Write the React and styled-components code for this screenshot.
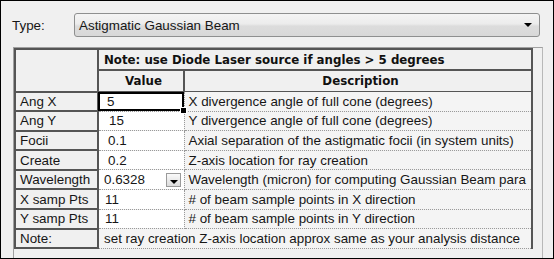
import React from 'react';
import styled, { createGlobalStyle } from 'styled-components';

const rows = [
  { label: 'Ang X', value: '5', desc: 'X divergence angle of full cone (degrees)', pad: 8, focus: true },
  { label: 'Ang Y', value: '15', desc: 'Y divergence angle of full cone (degrees)', pad: 10 },
  { label: 'Focii', value: '0.1', desc: 'Axial separation of the astigmatic focii (in system units)', pad: 9 },
  { label: 'Create', value: '0.2', desc: 'Z-axis location for ray creation', pad: 9 },
  { label: 'Wavelength', value: '0.6328', desc: 'Wavelength (micron) for computing Gaussian Beam para', pad: 5, drop: true },
  { label: 'X samp Pts', value: '11', desc: '# of beam sample points in X direction', pad: 6 },
  { label: 'Y samp Pts', value: '11', desc: '# of beam sample points in Y direction', pad: 6 },
];

const App = () => {
  return (
    <>
      <GlobalStyle />
      <Window>
        <TypeRow>
          <TypeLabel>Type:</TypeLabel>
          <Combo>
            <span>Astigmatic Gaussian Beam</span>
            <ComboArrow />
          </Combo>
        </TypeRow>
        <Panel>
          <Grid>
            <colgroup>
              <col style={{ width: 83 }} />
              <col style={{ width: 86 }} />
              <col style={{ width: 348 }} />
            </colgroup>
            <tbody>
              <tr>
                <Corner rowSpan={2} />
                <HeadCell colSpan={2} $h={21}>Note: use Diode Laser source if angles &gt; 5 degrees</HeadCell>
              </tr>
              <tr>
                <HeadCell $h={22} $center>Value</HeadCell>
                <HeadCell $h={22} $center>Description</HeadCell>
              </tr>
              {rows.map((r) => (
                <tr key={r.label}>
                  <RowHead>{r.label}</RowHead>
                  <ValueCell $pad={r.pad} $focus={r.focus}>
                    {r.value}
                    {r.drop && <DropButton />}
                    {r.focus && <FillHandle />}
                  </ValueCell>
                  <DescCell>{r.desc}</DescCell>
                </tr>
              ))}
              <tr>
                <RowHead>Note:</RowHead>
                <NoteCell colSpan={2}>
                  set ray creation Z-axis location approx same as your analysis distance
                </NoteCell>
              </tr>
            </tbody>
          </Grid>
          <Strip />
        </Panel>
      </Window>
    </>
  );
};

const GlobalStyle = createGlobalStyle`
  html, body {
    margin: 0;
    padding: 0;
    background: #f0f0f0;
  }
  body {
    font-family: "Liberation Sans", Arial, sans-serif;
    font-size: 13.4px;
    color: #161616;
  }
`;

const Window = styled.div`
  box-sizing: border-box;
  width: 554px;
  height: 259px;
  border: 1px solid #000;
  background: #f0f0f0;
  padding: 12px 12px 0 11px;
  overflow: hidden;
`;

const TypeRow = styled.div`
  display: flex;
  align-items: center;
  height: 24px;
`;

const TypeLabel = styled.div`
  width: 62px;
  font-size: 13.4px;
`;

const Combo = styled.div`
  box-sizing: border-box;
  flex: 1;
  height: 24px;
  margin-right: 1px;
  border: 1px solid #8e8f8f;
  border-radius: 3px;
  background: linear-gradient(#f4f4f4 0%, #ececec 45%, #dcdcdc 55%, #d8d8d8 100%);
  display: flex;
  align-items: center;
  justify-content: space-between;
  padding: 0 6px 0 4px;
  font-size: 13.4px;
`;

const ComboArrow = styled.div`
  width: 0;
  height: 0;
  border-left: 4px solid transparent;
  border-right: 4px solid transparent;
  border-top: 4px solid #000;
  margin-right: 1px;
`;

const Panel = styled.div`
  display: flex;
  margin-top: 10px;
  margin-left: 1px;
  width: 528px;
  border-top: 1px solid #a0a0a0;
  border-left: 1px solid #a0a0a0;
  border-right: 1px solid #b8b8b8;
  height: 230px;
`;

const Grid = styled.table`
  table-layout: fixed;
  border-collapse: collapse;
  width: 517px;
  align-self: flex-start;
`;

const Strip = styled.div`
  flex: 1;
  background: #f0f0f0;
`;

const Corner = styled.td`
  background: #f0f0f0;
  border: 2px solid #555;
  padding: 0;
`;

const HeadCell = styled.td`
  height: ${(p) => p.$h - 2}px;
  padding: 0 0 0 5px;
  border: 2px solid #555;
  border-bottom-width: 1px;
  background: #f0f0f0;
  font-family: "DejaVu Sans", Verdana, sans-serif;
  font-weight: bold;
  font-size: 11.8px;
  color: #111;
  text-align: ${(p) => (p.$center ? 'center' : 'left')};
  white-space: nowrap;
  overflow: hidden;
`;

const RowHead = styled.td`
  height: 17.6px;
  padding: 0 0 0 4px;
  border: 2px solid #555;
  border-top-width: 1px;
  background: #f0f0f0;
  white-space: nowrap;
  overflow: hidden;
`;

const ValueCell = styled.td`
  position: relative;
  height: 17.6px;
  padding: 0 0 0 ${(p) => p.$pad}px;
  background: #fff;
  border: 1px dotted #9a9a9a;
  white-space: nowrap;
  ${(p) => p.$focus && 'outline: 2px solid #000; outline-offset: -2px;'}
`;

const FillHandle = styled.span`
  position: absolute;
  right: -3px;
  bottom: -3px;
  width: 5px;
  height: 5px;
  background: #000;
  border: 1px solid #fff;
  z-index: 2;
`;

const DropButton = styled.span`
  position: absolute;
  right: 3px;
  top: 3px;
  width: 15px;
  height: 14px;
  box-sizing: border-box;
  border: 1px solid #9a9a9a;
  background: linear-gradient(#fafafa, #dcdcdc);
  &::after {
    content: '';
    position: absolute;
    left: 3px;
    top: 6px;
    width: 0;
    height: 0;
    border-left: 4px solid transparent;
    border-right: 4px solid transparent;
    border-top: 4px solid #000;
  }
`;

const DescCell = styled.td`
  height: 17.6px;
  padding: 0 0 0 4px;
  background: #f4f4f4;
  border: 1px dotted #9a9a9a;
  border-right: 2px solid #555;
  white-space: nowrap;
  overflow: hidden;
`;

const NoteCell = styled(DescCell)`
  padding-left: 5px;
`;

export default App;
